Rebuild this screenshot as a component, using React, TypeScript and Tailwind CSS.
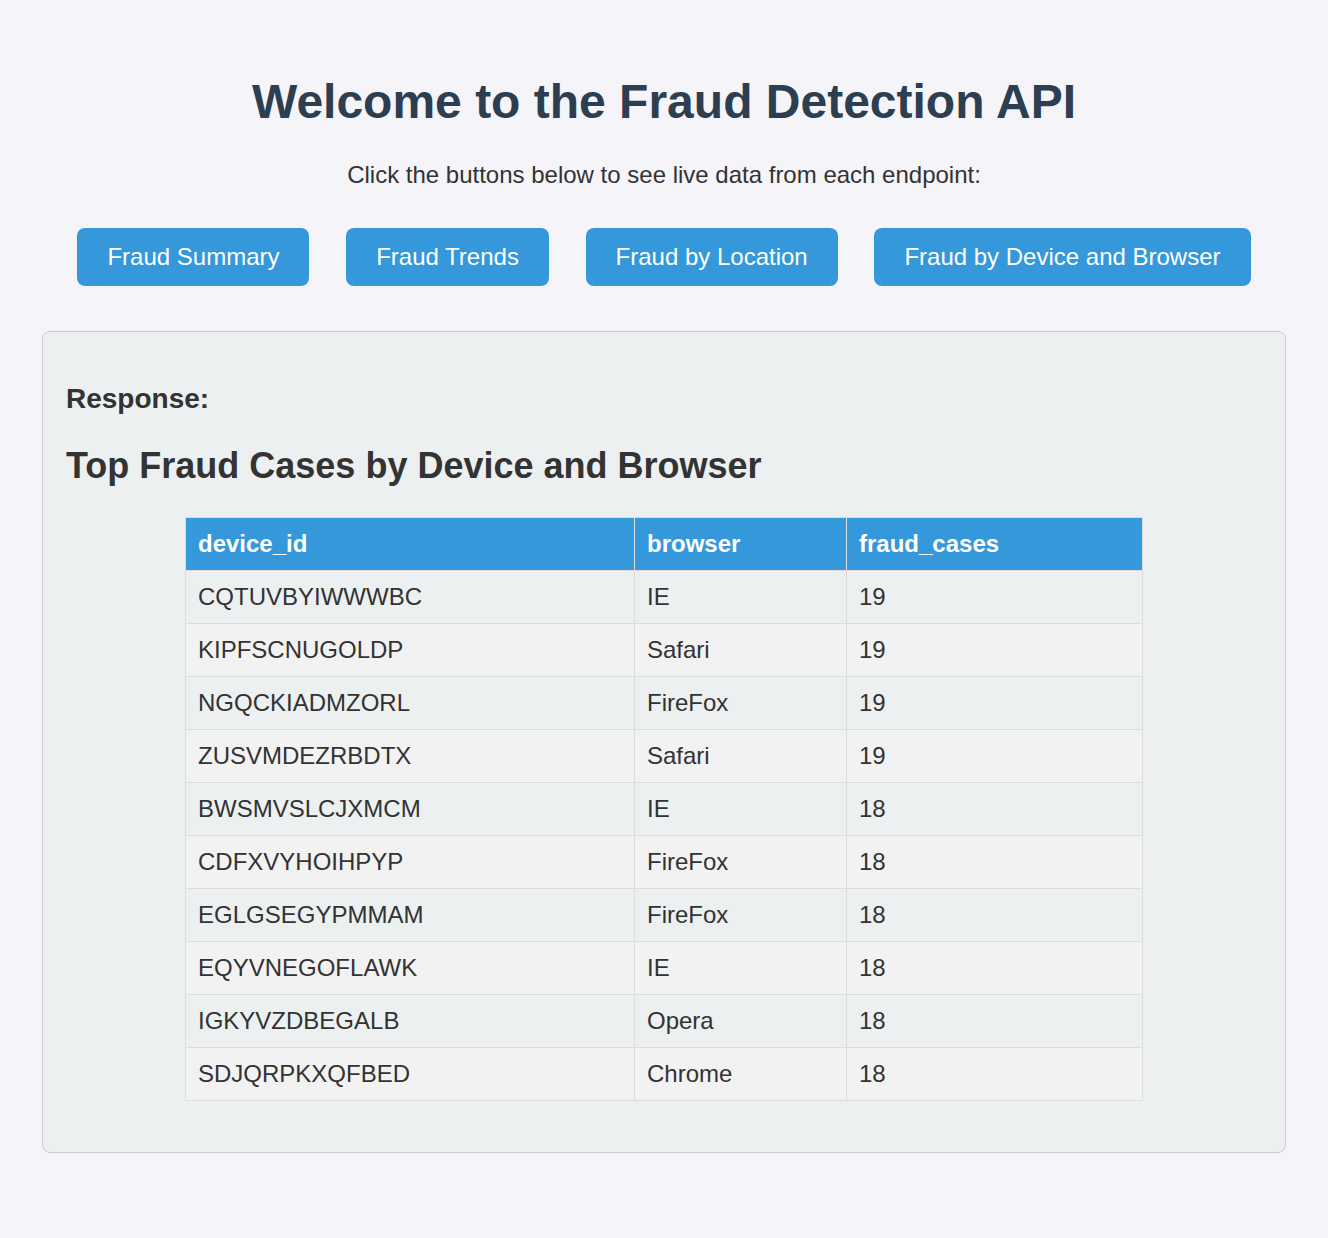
import React from "react";

const rows = [
  { device_id: "CQTUVBYIWWWBC", browser: "IE", fraud_cases: 19 },
  { device_id: "KIPFSCNUGOLDP", browser: "Safari", fraud_cases: 19 },
  { device_id: "NGQCKIADMZORL", browser: "FireFox", fraud_cases: 19 },
  { device_id: "ZUSVMDEZRBDTX", browser: "Safari", fraud_cases: 19 },
  { device_id: "BWSMVSLCJXMCM", browser: "IE", fraud_cases: 18 },
  { device_id: "CDFXVYHOIHPYP", browser: "FireFox", fraud_cases: 18 },
  { device_id: "EGLGSEGYPMMAM", browser: "FireFox", fraud_cases: 18 },
  { device_id: "EQYVNEGOFLAWK", browser: "IE", fraud_cases: 18 },
  { device_id: "IGKYVZDBEGALB", browser: "Opera", fraud_cases: 18 },
  { device_id: "SDJQRPKXQFBED", browser: "Chrome", fraud_cases: 18 },
];

const buttons = [
  "Fraud Summary",
  "Fraud Trends",
  "Fraud by Location",
  "Fraud by Device and Browser",
];

const App = () => {
  return (
    <div className="min-h-screen bg-[#f4f4f9] px-[42px] pt-[42px] pb-[60px] text-[#333] font-['Liberation_Sans',Arial,sans-serif]">
      {/* header */}
      <h1 className="mt-[32px] text-center text-[48px] leading-[55px] font-bold text-[#2c3e50]">
        Welcome to the Fraud Detection API
      </h1>
      <p className="mt-[32px] text-center text-[24px] leading-[28px]">
        Click the buttons below to see live data from each endpoint:
      </p>

      {/* endpoint buttons */}
      <div className="mt-[39px] flex justify-center gap-[36.7px]">
        {buttons.map((label) => (
          <button
            key={label}
            className="h-[58px] rounded-[8px] bg-[#3498db] px-[30px] text-[24px] leading-[28px] text-white"
          >
            {label}
          </button>
        ))}
      </div>

      {/* response panel */}
      <div className="mt-[45px] rounded-[8px] border border-[#ccc] bg-[#ecf0f1] px-[23px] pt-[23px] pb-[22px]">
        <h3 className="mt-[28px] text-[28px] leading-[32px] font-bold">
          Response:
        </h3>
        <h2 className="mt-[30px] text-[36px] leading-[41px] font-bold">
          Top Fraud Cases by Device and Browser
        </h2>
        <table className="mx-auto mt-[31px] mb-[29px] w-[957px] table-fixed border-collapse text-left text-[24px] leading-[28px]">
          <thead>
            <tr className="bg-[#3498db] text-white">
              <th className="w-[449px] border border-[#ddd] px-[12px] py-[12px] font-bold">
                device_id
              </th>
              <th className="w-[212px] border border-[#ddd] px-[12px] py-[12px] font-bold">
                browser
              </th>
              <th className="w-[296px] border border-[#ddd] px-[12px] py-[12px] font-bold">
                fraud_cases
              </th>
            </tr>
          </thead>
          <tbody>
            {rows.map((row, i) => (
              <tr
                key={row.device_id}
                className={i % 2 === 1 ? "bg-[#f2f2f2]" : ""}
              >
                <td className="border border-[#ddd] px-[12px] py-[12px]">
                  {row.device_id}
                </td>
                <td className="border border-[#ddd] px-[12px] py-[12px]">
                  {row.browser}
                </td>
                <td className="border border-[#ddd] px-[12px] py-[12px]">
                  {row.fraud_cases}
                </td>
              </tr>
            ))}
          </tbody>
        </table>
      </div>
    </div>
  );
};

export default App;
